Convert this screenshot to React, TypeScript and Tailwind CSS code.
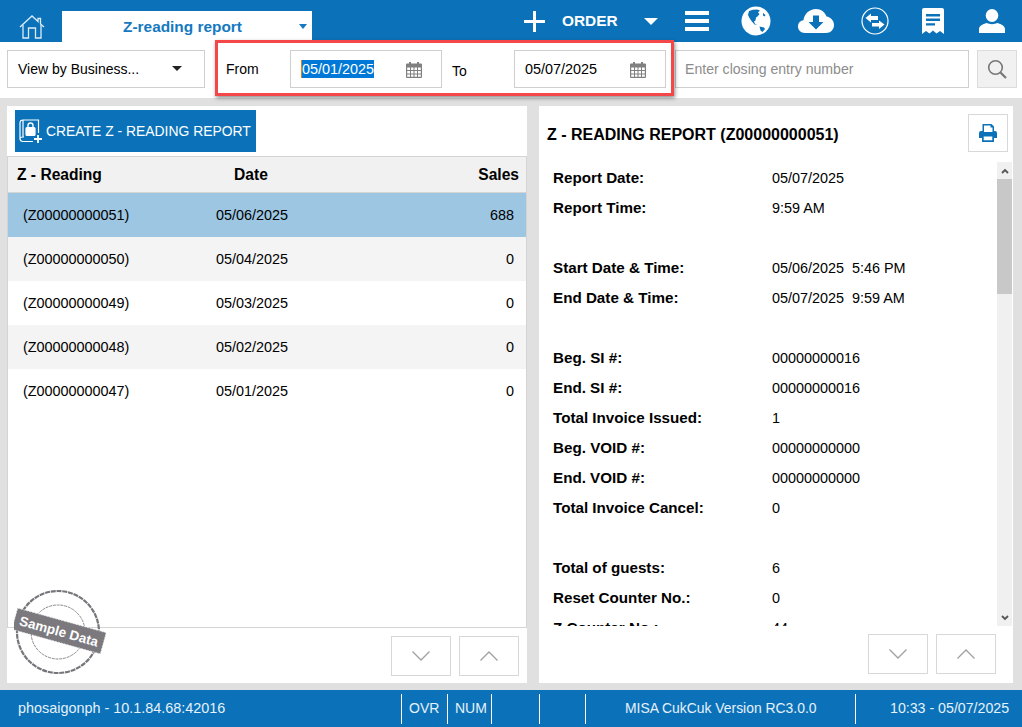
import React from "react";

/* ---------- Data ---------- */
const readings = [
  { id: "(Z00000000051)", date: "05/06/2025", sales: "688" },
  { id: "(Z00000000050)", date: "05/04/2025", sales: "0" },
  { id: "(Z00000000049)", date: "05/03/2025", sales: "0" },
  { id: "(Z00000000048)", date: "05/02/2025", sales: "0" },
  { id: "(Z00000000047)", date: "05/01/2025", sales: "0" },
];

const reportRows = [
  ["Report Date:", "05/07/2025"],
  ["Report Time:", "9:59 AM"],
  null,
  ["Start Date & Time:", "05/06/2025\u00a0\u00a05:46 PM"],
  ["End Date & Time:", "05/07/2025\u00a0\u00a09:59 AM"],
  null,
  ["Beg. SI #:", "00000000016"],
  ["End. SI #:", "00000000016"],
  ["Total Invoice Issued:", "1"],
  ["Beg. VOID #:", "00000000000"],
  ["End. VOID #:", "00000000000"],
  ["Total Invoice Cancel:", "0"],
  null,
  ["Total of guests:", "6"],
  ["Reset Counter No.:", "0"],
  ["Z Counter No.:", "44"],
];

/* ---------- Icons ---------- */
function HomeIcon() {
  return (
    <svg width="26" height="24" viewBox="0 0 26 24" fill="none" stroke="#dcecf7" strokeWidth="1.3">
      <path d="M1 12 L13 1 L19 6.5 V3.5 H21.5 V9 L25 12" />
      <path d="M4 10 V23 H9.5 V13 H16.5 V23 H22 V10" />
    </svg>
  );
}

function GlobeIcon() {
  return (
    <svg width="30" height="30" viewBox="0 0 30 30">
      <circle cx="15" cy="15" r="14.5" fill="#fff" />
      <path
        d="M8 5 L12 3.8 L16 3.4 L19 4.5 L17 6.5 L18.5 8 L16.5 10.5 L15 11.5 L14.5 14.5 L13 15.5 L14 18 L16.5 19 L13.5 18.5 L10.5 15 L8.5 12 L7 9 Z"
        fill="#0b72b9"
      />
      <path d="M18.5 20.5 L23 21.5 L24 23 L21.5 26 L19.5 24.5 L19 22.5 Z" fill="#0b72b9" />
      <path d="M22 7 L24.5 9 L23.5 10.5 L22 9.5 Z" fill="#0b72b9" />
    </svg>
  );
}

function CloudIcon() {
  return (
    <svg width="36" height="24" viewBox="0 0 36 24">
      <path
        d="M7 24 C2.5 24 0 21 0 17.5 C0 14 2.5 11.5 5.5 11.3 C6 5 11.5 0 18 0 C23 0 27 3 28.5 7.5 C32.5 8 36 11.5 36 16 C36 20.5 32.5 24 28 24 Z"
        fill="#fff"
      />
      <path d="M15 6.5 H21 V13 H25.5 L18 20.5 L10.5 13 H15 Z" fill="#0b72b9" />
    </svg>
  );
}

function SwapIcon() {
  return (
    <svg width="28" height="28" viewBox="0 0 28 28" fill="none">
      <circle cx="14" cy="14" r="13" stroke="#fff" strokeWidth="1.2" />
      <path d="M4.5 11 L10 6.5 V9 H17 V13 H10 V15.5 Z" fill="#fff" />
      <path d="M23.5 17.5 L18 13.5 V16 H11 V19.5 H18 V22 Z" fill="#fff" />
    </svg>
  );
}

function ReceiptIcon() {
  return (
    <svg width="22" height="26" viewBox="0 0 22 26">
      <path
        d="M2 0 H20 Q22 0 22 2 V26 L18 23 L14.5 25.5 L11 22.5 L7.5 25.5 L4 23 L0 26 V2 Q0 0 2 0 Z"
        fill="#fff"
      />
      <path d="M4 6 H18 V8.4 H4 Z M4 10.6 H18 V13 H4 Z M4 15.2 H13 V17.6 H4 Z" fill="#0b72b9" />
    </svg>
  );
}

function UserIcon() {
  return (
    <svg width="26" height="24" viewBox="0 0 26 24" fill="#fff">
      <ellipse cx="13" cy="6.5" rx="6.3" ry="6.5" />
      <path d="M0 24 V20 C0 16.5 5 14.5 8 14 C10 15.5 16 15.5 18 14 C21 14.5 26 16.5 26 20 V24 Z" />
    </svg>
  );
}

function CalendarIcon() {
  return (
    <svg width="16" height="17" viewBox="0 0 16 17">
      <path
        fillRule="evenodd"
        d="M1 2.5 H3 V1 H5 V2.5 H11 V1 H13 V2.5 H15 Q16 2.5 16 3.5 V16 Q16 17 15 17 H1 Q0 17 0 16 V3.5 Q0 2.5 1 2.5 Z M1.2 6.5 V9 H4 V6.5 Z M5 6.5 V9 H7.5 V6.5 Z M8.5 6.5 V9 H11 V6.5 Z M12 6.5 V9 H14.8 V6.5 Z M1.2 10 V12.5 H4 V10 Z M5 10 V12.5 H7.5 V10 Z M8.5 10 V12.5 H11 V10 Z M12 10 V12.5 H14.8 V10 Z M1.2 13.5 V15.8 H4 V13.5 Z M5 13.5 V15.8 H7.5 V13.5 Z M8.5 13.5 V15.8 H11 V13.5 Z M12 13.5 V15.8 H14.8 V13.5 Z"
        fill="#808080"
      />
    </svg>
  );
}

function SearchIcon() {
  return (
    <svg width="20" height="20" viewBox="0 0 20 20" fill="none" stroke="#777" strokeWidth="1.6">
      <circle cx="8.5" cy="8.5" r="6.8" />
      <path d="M13.5 13.5 L19 19" strokeWidth="2.2" />
    </svg>
  );
}

function LockBookIcon() {
  return (
    <svg width="24" height="24" viewBox="0 0 24 24" fill="none" stroke="#fff" strokeWidth="1.2">
      <path d="M4 1 H19.5 V14" />
      <path d="M4 1 Q1 1 1 4 V19.5 Q1 22.5 4 22.5 H14 M1 19.5 Q1 18 4 18 H5 M4 1 V17.8" />
      <rect x="7" y="8.5" width="9" height="8" rx="1" fill="#fff" />
      <path d="M9 8.5 V6.5 Q9 4 11.5 4 Q14 4 14 6.5 V8.5" strokeWidth="1.4" />
      <path d="M19 16 V24 M15 20 H23" strokeWidth="1.8" />
    </svg>
  );
}

function PrinterIcon() {
  return (
    <svg width="18" height="18" viewBox="0 0 18 18" fill="#0b72b9">
      <path
        fillRule="evenodd"
        d="M3.5 0 H12.5 L15 2.5 V7 H16 Q18 7 18 9 V14 H15 V18 H3 V14 H0 V9 Q0 7 2 7 H3.5 Z M5 1.5 V8 H13.5 V3.5 H11.5 V1.5 Z M4.7 12.5 V16.3 H13.3 V12.5 Z"
      />
    </svg>
  );
}

function Chevron({ up }: { up?: boolean }) {
  return (
    <svg width="18" height="10" viewBox="0 0 18 10" fill="none" stroke="#a0a0a0" strokeWidth="1.3">
      <path d={up ? "M0.5 9.5 L9 1 L17.5 9.5" : "M0.5 0.5 L9 9 L17.5 0.5"} />
    </svg>
  );
}

function SampleStamp() {
  return (
    <svg width="92" height="88" viewBox="0 0 92 88" fill="none" className="absolute left-[14px] top-[588px]">
      <circle cx="44" cy="44" r="41" stroke="#77757a" strokeWidth="2.2" strokeDasharray="5 0.8" />
      <circle cx="44" cy="44" r="27" stroke="#8a888c" strokeWidth="1" strokeDasharray="3 0.8" />
      <g transform="rotate(15.5 45 43)">
        <rect x="-1" y="32" width="92" height="22" fill="#7b797e" stroke="#fff" strokeWidth="0.6" strokeDasharray="2 1" />
        <text x="45" y="48" textAnchor="middle" fill="#fff" fontSize="13.5" fontWeight="700" className="font-['Liberation_Sans']">
          Sample Data
        </text>
      </g>
    </svg>
  );
}

function PagerButton({ up }: { up?: boolean }) {
  return (
    <button className="w-[60px] h-[40px] border border-[#d8d8d8] bg-white flex items-center justify-center">
      <Chevron up={up} />
    </button>
  );
}

function DateField({ value, selected }: { value: string; selected?: boolean }) {
  return (
    <div className="w-[152px] h-[38px] border border-[#cfcfcf] bg-white flex items-center pl-[10px] pr-[19px] justify-between text-[14.4px]">
      {selected ? (
        <span className="bg-[#0078d7] text-white leading-[18px] border-l border-[#e0801c]">{value}</span>
      ) : (
        <span className="pt-[1px]">{value}</span>
      )}
      <CalendarIcon />
    </div>
  );
}

export default function App() {
  return (
    <div className="relative w-[1022px] h-[727px] overflow-hidden flex flex-col bg-[#e0e0e0] text-[14.4px] text-black font-['Liberation_Sans',Arial,sans-serif]">
      {/* ---------- Top bar ---------- */}
      <div className="h-[42px] shrink-0 bg-[#0b72b9] flex items-center text-white">
        <div className="ml-[19px] mt-[12px]">
          <HomeIcon />
        </div>
        <div className="ml-[17px] self-end w-[250px] h-[31px] shrink-0 bg-white flex items-center justify-center relative">
          <span className="text-[#1479c0] font-bold text-[15.4px] mr-[9px]">Z-reading report</span>
          <span className="absolute right-[5px] top-[13px] w-0 h-0 border-x-[4px] border-x-transparent border-t-[5px] border-t-[#1479c0]" />
        </div>
        <div className="ml-[212px] w-[21px] h-[21px] relative shrink-0">
          <span className="absolute left-0 right-0 top-[9px] h-[3px] bg-white" />
          <span className="absolute top-0 bottom-0 left-[9px] w-[3px] bg-white" />
        </div>
        <span className="ml-[17px] font-bold text-[15.4px] w-[55px]">ORDER</span>
        <span className="ml-[27px] w-0 h-0 border-x-[7px] border-x-transparent border-t-[7px] border-t-white" />
        <div className="ml-[27px] w-[24px] flex flex-col gap-[4px]">
          <span className="h-[4px] bg-white" />
          <span className="h-[4px] bg-white" />
          <span className="h-[4px] bg-white" />
        </div>
        <div className="ml-[32px]">
          <GlobeIcon />
        </div>
        <div className="ml-[27px]">
          <CloudIcon />
        </div>
        <div className="ml-[27px]">
          <SwapIcon />
        </div>
        <div className="ml-[33px]">
          <ReceiptIcon />
        </div>
        <div className="ml-[35px]">
          <UserIcon />
        </div>
      </div>

      {/* ---------- Filter bar ---------- */}
      <div className="h-[56px] shrink-0 bg-white flex items-start pt-[8px] pl-[7px] text-[14px]">
        <div className="w-[198px] h-[38px] border border-[#cfcfcf] flex items-center pl-[10px] relative">
          <span>View by Business...</span>
          <span className="absolute right-[22px] top-[15px] w-0 h-0 border-x-[5px] border-x-transparent border-t-[5px] border-t-[#222]" />
        </div>
        <span className="ml-[21px] w-[64px] h-[38px] flex items-center">From</span>
        <DateField value="05/01/2025" selected />
        <span className="ml-[10px] w-[62px] h-[38px] flex items-center pt-[4px]">To</span>
        <DateField value="05/07/2025" />
        <div className="ml-[9px] w-[294px] h-[38px] border border-[#cfcfcf] flex items-center pl-[9px] pt-[1px] text-[#8c8c8c] text-[14.1px]">
          Enter closing entry number
        </div>
        <div className="ml-[8px] w-[40px] h-[38px] border border-[#dcdcdc] bg-[#f1f1f1] flex items-center justify-center">
          <SearchIcon />
        </div>
      </div>

      {/* ---------- Panels ---------- */}
      <div className="flex-1 min-h-0 flex pt-[8px] pb-[7px] pl-[7px] gap-[12px]">
        {/* Left panel */}
        <div className="w-[520px] bg-white flex flex-col">
          <div className="h-[50px] shrink-0 pl-[8px] pt-[4px]">
            <button className="w-[241px] h-[42px] bg-[#0b72b9] text-white flex items-center pl-[4px] gap-[3px]">
              <LockBookIcon />
              <span className="text-[13.9px]">CREATE Z - READING REPORT</span>
            </button>
          </div>
          <div className="flex-1 min-h-0 border-b border-r border-l border-[#d4d4d4]">
            <div className="h-[37px] bg-[#f1f1f1] border-y border-[#d4d4d4] flex items-center font-bold text-[15.6px] pt-[1px]">
              <span className="w-[199px] pl-[9px]">Z - Reading</span>
              <span className="w-[100px] pl-[27px]">Date</span>
              <span className="flex-1 text-right pr-[7px]">Sales</span>
            </div>
            {readings.map((r, i) => (
              <div
                key={r.id}
                className={`h-[44px] flex items-center pt-[1px] ${
                  i === 0 ? "bg-[#9dc6e3]" : i % 2 === 1 ? "bg-[#f4f4f4]" : "bg-white"
                }`}
              >
                <span className="w-[193px] pl-[15px]">{r.id}</span>
                <span className="w-[100px] pl-[15px]">{r.date}</span>
                <span className="flex-1 text-right pr-[12px]">{r.sales}</span>
              </div>
            ))}
          </div>
          <div className="h-[55px] shrink-0 flex justify-end items-start pt-[8px] pr-[8px] gap-[8px]">
            <PagerButton />
            <PagerButton up />
          </div>
        </div>

        {/* Right panel */}
        <div className="w-[474px] bg-white flex flex-col">
          <div className="h-[56px] shrink-0 flex items-start pl-[8px] pt-[8px]">
            <span className="font-bold text-[16px] w-[421px] h-[38px] flex items-center pt-[4px]">
              Z - READING REPORT (Z00000000051)
            </span>
            <div className="w-[40px] h-[38px] border border-[#d8d8d8] flex items-center justify-center">
              <PrinterIcon />
            </div>
          </div>
          <div className="flex-1 min-h-0 flex">
            <div className="flex-1 min-w-0 overflow-hidden pl-[14px] pt-[1px] h-[464px]">
              {reportRows.map((row, i) =>
                row ? (
                  <div key={i} className="h-[30px] flex items-center">
                    <span className="w-[219px] font-bold text-[15.2px]">{row[0]}</span>
                    <span className="pt-[1px]">{row[1]}</span>
                  </div>
                ) : (
                  <div key={i} className="h-[30px]" />
                )
              )}
            </div>
            {/* Scrollbar */}
            <div className="w-[15px] h-[464px] mr-[1px] bg-[#f0f0f0] flex flex-col items-center">
              <div className="h-[17px] flex items-center justify-center">
                <svg width="8" height="6" viewBox="0 0 8 6" fill="none" stroke="#555" strokeWidth="1.8">
                  <path d="M1 5 L4 2 L7 5" />
                </svg>
              </div>
              <div className="w-full h-[115px] bg-[#c8c8c8]" />
              <div className="flex-1" />
              <div className="h-[17px] flex items-center justify-center">
                <svg width="8" height="6" viewBox="0 0 8 6" fill="none" stroke="#555" strokeWidth="1.8">
                  <path d="M1 1 L4 4 L7 1" />
                </svg>
              </div>
            </div>
          </div>
          <div className="h-[57px] shrink-0 flex justify-end items-start pt-[8px] pr-[17px] gap-[8px]">
            <PagerButton />
            <PagerButton up />
          </div>
        </div>
      </div>

      {/* ---------- Status bar ---------- */}
      <div className="h-[37px] shrink-0 bg-[#0b72b9] flex items-center text-[#e6f1f9] text-[14px]">
        <span className="w-[401px] pl-[18px] text-[14.4px]">phosaigonph - 10.1.84.68:42016</span>
        <span className="w-[46px] h-[30px] border-l border-white flex items-center pl-[7px]">OVR</span>
        <span className="w-[44px] h-[30px] border-l border-white flex items-center pl-[7px]">NUM</span>
        <span className="w-[48px] h-[30px] border-l border-white" />
        <span className="w-[46px] h-[30px] border-l border-white" />
        <span className="w-[270px] h-[30px] border-l border-white flex items-center pl-[39px] text-[13.9px]">
          MISA CukCuk Version RC3.0.0
        </span>
        <span className="flex-1 h-[30px] border-l border-white flex items-center pl-[34px] text-[14.2px]">10:33 - 05/07/2025</span>
      </div>

      {/* Overlays: red callout + stamp */}
      <div className="absolute left-[215px] top-[40px] w-[459px] h-[56px] border-[3px] border-[#f44848] shadow-[1px_2px_4px_rgba(0,0,0,0.45)]" />
      <SampleStamp />
    </div>
  );
}
